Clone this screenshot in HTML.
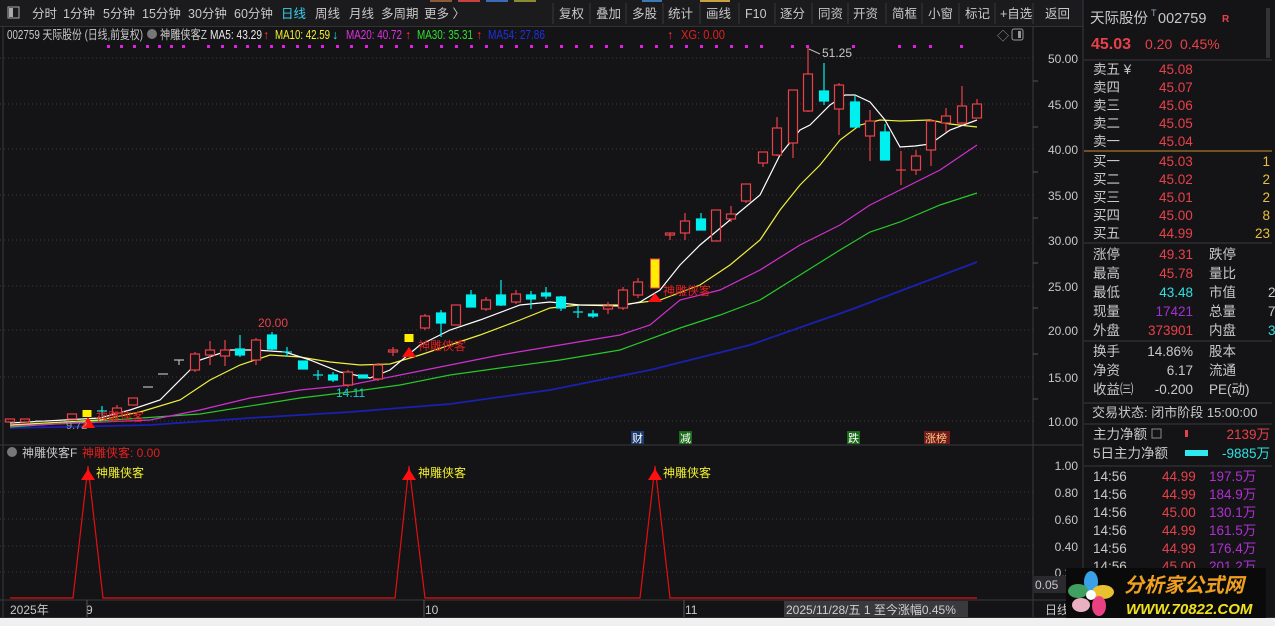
<!DOCTYPE html>
<html><head><meta charset="utf-8">
<style>
html,body{margin:0;padding:0;background:#141416;width:1275px;height:626px;overflow:hidden}
svg{display:block;font-family:"Liberation Sans","Noto Sans CJK SC",sans-serif}
</style></head><body>
<svg width="1275" height="626" viewBox="0 0 1275 626" xmlns="http://www.w3.org/2000/svg">
<rect width="1275" height="626" fill="#141416"/>
<!-- toolbar -->
<rect x="0" y="0" width="1083" height="26" fill="#1b1b1e"/>
<rect x="0" y="26" width="1083" height="1" fill="#333"/>
<rect x="430" y="0" width="22" height="2" fill="#8a5a3a"/><rect x="458" y="0" width="22" height="2" fill="#c84040"/><rect x="486" y="0" width="22" height="2" fill="#3a6ab8"/><rect x="514" y="0" width="22" height="2" fill="#8a8a30"/>
<rect x="642" y="0" width="20" height="2" fill="#3a7ab8"/><rect x="700" y="0" width="30" height="2" fill="#c8a040"/>
<rect x="8" y="7" width="11" height="11" fill="none" stroke="#aaa" stroke-width="1"/><rect x="9" y="8" width="4" height="9" fill="#aaa"/>
<g font-size="12.5" fill="#c8c8c8">
<text x="32" y="18">分时</text><text x="63" y="18">1分钟</text><text x="103" y="18">5分钟</text><text x="142" y="18">15分钟</text><text x="188" y="18">30分钟</text><text x="234" y="18">60分钟</text><text x="281" y="18" fill="#3ad0e8">日线</text><text x="315" y="18">周线</text><text x="349" y="18">月线</text><text x="381" y="18">多周期</text><text x="424" y="18">更多 〉</text>
<text x="559" y="18">复权</text><text x="596" y="18">叠加</text><text x="632" y="18">多股</text><text x="668" y="18">统计</text><text x="706" y="18">画线</text><text x="745" y="18">F10</text><text x="780" y="18">逐分</text><text x="818" y="18">同资</text><text x="853" y="18">开资</text><text x="892" y="18">简框</text><text x="928" y="18">小窗</text><text x="965" y="18">标记</text><text x="1000" y="18">+自选</text><text x="1045" y="18">返回</text>
</g>
<g stroke="#3a3a3e"><line x1="553" y1="3" x2="553" y2="24"/><line x1="590" y1="3" x2="590" y2="24"/><line x1="626" y1="3" x2="626" y2="24"/><line x1="663" y1="3" x2="663" y2="24"/><line x1="700" y1="3" x2="700" y2="24"/><line x1="739" y1="3" x2="739" y2="24"/><line x1="775" y1="3" x2="775" y2="24"/><line x1="812" y1="3" x2="812" y2="24"/><line x1="848" y1="3" x2="848" y2="24"/><line x1="886" y1="3" x2="886" y2="24"/><line x1="922" y1="3" x2="922" y2="24"/><line x1="959" y1="3" x2="959" y2="24"/><line x1="995" y1="3" x2="995" y2="24"/><line x1="1033" y1="3" x2="1033" y2="24"/></g>
<!-- info line -->
<g font-size="12.5">
<text x="7" y="39" fill="#c8c8c8" textLength="136" lengthAdjust="spacingAndGlyphs">002759 天际股份 (日线,前复权)</text>
<circle cx="152" cy="34" r="5" fill="#777"/>
<text x="160" y="39" fill="#c8c8c8" textLength="47" lengthAdjust="spacingAndGlyphs">神雕侠客Z</text>
<text x="210" y="39" fill="#e8e8e8" textLength="52" lengthAdjust="spacingAndGlyphs">MA5: 43.29</text><text x="263" y="39" fill="#ff3030">↑</text>
<text x="275" y="39" fill="#f0f030" textLength="55" lengthAdjust="spacingAndGlyphs">MA10: 42.59</text><text x="332" y="39" fill="#30e0e8">↓</text>
<text x="346" y="39" fill="#e030e0" textLength="56" lengthAdjust="spacingAndGlyphs">MA20: 40.72</text><text x="405" y="39" fill="#ff3030">↑</text>
<text x="417" y="39" fill="#30e030" textLength="56" lengthAdjust="spacingAndGlyphs">MA30: 35.31</text><text x="476" y="39" fill="#ff3030">↑</text>
<text x="488" y="39" fill="#2030e0" textLength="57" lengthAdjust="spacingAndGlyphs">MA54: 27.86</text><text x="667" y="39" fill="#ff3030">↑</text>
<text x="681" y="39" fill="#e02020" textLength="44" lengthAdjust="spacingAndGlyphs">XG: 0.00</text>
</g>
<text x="997" y="40" font-size="12" fill="#999">◇</text>
<rect x="1012" y="29" width="11" height="11" rx="2" fill="none" stroke="#999"/><rect x="1018" y="31" width="3" height="7" fill="#999"/>
<!-- grid -->
<g stroke="#3a3a3e" stroke-dasharray="1 3">
<line x1="0" y1="58" x2="1033" y2="58"/><line x1="0" y1="104" x2="1033" y2="104"/><line x1="0" y1="149" x2="1033" y2="149"/><line x1="0" y1="195" x2="1033" y2="195"/><line x1="0" y1="240" x2="1033" y2="240"/><line x1="0" y1="286" x2="1033" y2="286"/><line x1="0" y1="330" x2="1033" y2="330"/><line x1="0" y1="377" x2="1033" y2="377"/><line x1="0" y1="421" x2="1033" y2="421"/>
<line x1="0" y1="492" x2="1033" y2="492"/><line x1="0" y1="519" x2="1033" y2="519"/><line x1="0" y1="546" x2="1033" y2="546"/><line x1="0" y1="572" x2="1033" y2="572"/>
</g>
<!-- dividers -->
<g stroke="#3a3a3e"><line x1="1033" y1="27" x2="1033" y2="618"/><line x1="0" y1="445" x2="1083" y2="445"/><line x1="0" y1="600" x2="1083" y2="600"/><line x1="1083" y1="0" x2="1083" y2="626"/><line x1="3" y1="27" x2="3" y2="618"/></g>
<rect x="0" y="617" width="1275" height="9" fill="#2a2a2e"/><rect x="0" y="618" width="1275" height="8" fill="#f0f0f0"/>
<!-- magenta dots -->
<g fill="#e020e0">
<rect x="107" y="45" width="3" height="3"/><rect x="120" y="45" width="3" height="3"/><rect x="133" y="45" width="3" height="3"/><rect x="146" y="45" width="3" height="3"/><rect x="158" y="45" width="3" height="3"/><rect x="170" y="45" width="3" height="3"/><rect x="182" y="45" width="3" height="3"/><rect x="207" y="45" width="3" height="3"/><rect x="221" y="45" width="3" height="3"/><rect x="234" y="45" width="3" height="3"/><rect x="246" y="45" width="3" height="3"/><rect x="258" y="45" width="3" height="3"/><rect x="270" y="45" width="3" height="3"/><rect x="282" y="45" width="3" height="3"/><rect x="296" y="45" width="3" height="3"/><rect x="308" y="45" width="3" height="3"/><rect x="321" y="45" width="3" height="3"/><rect x="336" y="45" width="3" height="3"/><rect x="350" y="45" width="3" height="3"/><rect x="365" y="45" width="3" height="3"/><rect x="380" y="45" width="3" height="3"/><rect x="395" y="45" width="3" height="3"/><rect x="410" y="45" width="3" height="3"/><rect x="425" y="45" width="3" height="3"/><rect x="440" y="45" width="3" height="3"/><rect x="455" y="45" width="3" height="3"/><rect x="470" y="45" width="3" height="3"/><rect x="485" y="45" width="3" height="3"/><rect x="500" y="45" width="3" height="3"/><rect x="515" y="45" width="3" height="3"/><rect x="530" y="45" width="3" height="3"/><rect x="545" y="45" width="3" height="3"/><rect x="560" y="45" width="3" height="3"/><rect x="575" y="45" width="3" height="3"/><rect x="590" y="45" width="3" height="3"/><rect x="605" y="45" width="3" height="3"/><rect x="620" y="45" width="3" height="3"/><rect x="640" y="45" width="3" height="3"/><rect x="655" y="45" width="3" height="3"/><rect x="670" y="45" width="3" height="3"/><rect x="685" y="45" width="3" height="3"/><rect x="700" y="45" width="3" height="3"/><rect x="715" y="45" width="3" height="3"/><rect x="730" y="45" width="3" height="3"/><rect x="745" y="45" width="3" height="3"/><rect x="760" y="45" width="3" height="3"/><rect x="791" y="45" width="3" height="3"/><rect x="806" y="45" width="3" height="3"/><rect x="852" y="45" width="3" height="3"/><rect x="898" y="45" width="3" height="3"/><rect x="913" y="45" width="3" height="3"/><rect x="929" y="45" width="3" height="3"/><rect x="960" y="45" width="3" height="3"/>
</g>
<!-- MA lines -->
<g fill="none" stroke-width="1.2">
<polyline stroke="#1a20b0" stroke-width="1.8" points="10,428 150,425 250,418 350,412 450,404 550,390 650,370 750,345 850,310 977,262"/>
<polyline stroke="#28c828" points="10,427 200,414 300,398 350,392 400,385 450,375 500,368 560,360 620,350 680,328 720,315 760,300 800,275 840,250 870,232 900,222 940,205 977,193"/>
<polyline stroke="#d030d0" points="10,426 150,420 200,410 250,398 300,390 350,385 400,375 450,365 500,355 560,345 620,335 650,325 680,300 720,290 760,270 800,245 840,225 870,205 900,190 940,170 977,145"/>
<polyline stroke="#f0f040" points="10,425 100,420 140,412 180,400 210,380 240,365 270,355 300,357 330,362 360,365 390,364 420,355 450,345 480,335 520,320 550,308 580,305 620,305 660,300 700,285 730,265 760,240 780,210 800,185 820,165 840,140 860,125 880,120 900,121 930,120 950,124 977,127"/>
<polyline stroke="#ffffff" points="10,423 100,418 130,410 160,400 180,380 200,360 230,350 255,350 285,352 310,360 340,372 370,378 390,370 420,345 450,330 480,320 520,305 550,302 580,305 620,306 640,302 660,290 680,265 700,245 730,220 760,195 780,155 800,130 810,125 830,105 845,95 855,95 870,102 885,120 900,147 915,146 930,144 950,130 977,120"/>
</g>
<!-- candles -->
<g stroke="#e8414a" fill="none" stroke-width="1.2">
<rect x="5.5" y="419" width="9" height="3"/><rect x="20.5" y="419" width="9" height="3"/><rect x="67.5" y="414" width="9" height="5"/>
<line x1="117" y1="405" x2="117" y2="416"/><rect x="112.5" y="408" width="9" height="5" fill="#141416"/>
<rect x="128.5" y="398" width="9" height="7"/>
<line x1="195" y1="352" x2="195" y2="372"/><rect x="190.5" y="354" width="9" height="16" fill="#141416"/>
<line x1="210" y1="341" x2="210" y2="365"/><rect x="205.5" y="350" width="9" height="5" fill="#141416"/>
<line x1="225" y1="340" x2="225" y2="366"/><rect x="220.5" y="350" width="9" height="6" fill="#141416"/>
<line x1="256" y1="338" x2="256" y2="365"/><rect x="251.5" y="340" width="9" height="20" fill="#141416"/>
<line x1="348" y1="370" x2="348" y2="387"/><rect x="343.5" y="372" width="9" height="13" fill="#141416"/>
<line x1="378" y1="363" x2="378" y2="381"/><rect x="373.5" y="365" width="9" height="14" fill="#141416"/>
<line x1="393" y1="347" x2="393" y2="356"/><rect x="388.5" y="350" width="9" height="2"/>
<line x1="425" y1="314" x2="425" y2="330"/><rect x="420.5" y="316" width="9" height="12" fill="#141416"/>
<rect x="451.5" y="305" width="9" height="20"/>
<line x1="486" y1="297" x2="486" y2="311"/><rect x="481.5" y="300" width="9" height="9" fill="#141416"/>
<line x1="516" y1="290" x2="516" y2="304"/><rect x="511.5" y="294" width="9" height="8" fill="#141416"/>
<line x1="608" y1="302" x2="608" y2="314"/><rect x="603.5" y="306" width="9" height="3" fill="#141416"/>
<line x1="623" y1="287" x2="623" y2="310"/><rect x="618.5" y="290" width="9" height="18" fill="#141416"/>
<line x1="638" y1="278" x2="638" y2="298"/><rect x="633.5" y="282" width="9" height="13" fill="#141416"/>
<line x1="670" y1="233" x2="670" y2="240"/><rect x="665.5" y="233" width="9" height="2"/>
<line x1="685" y1="213" x2="685" y2="240"/><rect x="680.5" y="221" width="9" height="12" fill="#141416"/>
<rect x="711.5" y="210" width="9" height="31"/>
<line x1="731" y1="206" x2="731" y2="222"/><rect x="726.5" y="214" width="9" height="5" fill="#141416"/>
<line x1="746" y1="184" x2="746" y2="203"/><rect x="741.5" y="184" width="9" height="17" fill="#141416"/>
<line x1="763" y1="152" x2="763" y2="167"/><rect x="758.5" y="152" width="9" height="11" fill="#141416"/>
<line x1="777" y1="117" x2="777" y2="156"/><rect x="772.5" y="128" width="9" height="27" fill="#141416"/>
<line x1="793" y1="90" x2="793" y2="158"/><rect x="788.5" y="90" width="9" height="53" fill="#141416"/>
<line x1="808" y1="47" x2="808" y2="112"/><rect x="803.5" y="74" width="9" height="37" fill="#141416"/>
<line x1="839" y1="83" x2="839" y2="135"/><rect x="834.5" y="85" width="9" height="24" fill="#141416"/>
<line x1="870" y1="110" x2="870" y2="161"/><rect x="865.5" y="121" width="9" height="15" fill="#141416"/>
<line x1="901" y1="151" x2="901" y2="185"/><line x1="896" y1="170" x2="906" y2="170"/>
<line x1="916" y1="150" x2="916" y2="175"/><rect x="911.5" y="156" width="9" height="14" fill="#141416"/>
<line x1="931" y1="120" x2="931" y2="166"/><rect x="926.5" y="121" width="9" height="29" fill="#141416"/>
<line x1="946" y1="108" x2="946" y2="132"/><rect x="941.5" y="116" width="9" height="7" fill="#141416"/>
<line x1="962" y1="86" x2="962" y2="125"/><rect x="957.5" y="106" width="9" height="17" fill="#141416"/>
<line x1="977" y1="99" x2="977" y2="118"/><rect x="972.5" y="104" width="9" height="14" fill="#141416"/>
</g>
<g stroke="#bbb" stroke-width="1.2"><line x1="35" y1="421" x2="45" y2="421"/><line x1="143" y1="387" x2="153" y2="387"/><line x1="158" y1="374" x2="168" y2="374"/><line x1="174" y1="360" x2="184" y2="360"/><line x1="179" y1="360" x2="179" y2="365"/></g>
<g stroke="#00f0f0" fill="#00f0f0" stroke-width="1.2">
<line x1="102" y1="406" x2="102" y2="416"/><line x1="97" y1="411" x2="107" y2="411"/>
<line x1="240" y1="335" x2="240" y2="357"/><rect x="235.5" y="349" width="9" height="6"/>
<line x1="272" y1="332" x2="272" y2="350"/><rect x="267.5" y="335" width="9" height="14"/>
<line x1="287" y1="347" x2="287" y2="357"/><line x1="282" y1="352" x2="292" y2="352"/>
<rect x="298.5" y="361" width="9" height="8"/>
<line x1="318" y1="370" x2="318" y2="380"/><line x1="313" y1="375" x2="323" y2="375"/>
<line x1="333" y1="372" x2="333" y2="382"/><rect x="328.5" y="375" width="9" height="5"/>
<rect x="358.5" y="375" width="9" height="3"/>
<line x1="441" y1="310" x2="441" y2="337"/><rect x="436.5" y="313" width="9" height="10"/>
<line x1="471" y1="290" x2="471" y2="307"/><rect x="466.5" y="295" width="9" height="12"/>
<line x1="501" y1="280" x2="501" y2="306"/><rect x="496.5" y="295" width="9" height="10"/>
<line x1="531" y1="291" x2="531" y2="309"/><rect x="526.5" y="295" width="9" height="4"/>
<line x1="546" y1="287" x2="546" y2="299"/><rect x="541.5" y="293" width="9" height="3"/>
<line x1="561" y1="296" x2="561" y2="311"/><rect x="556.5" y="297" width="9" height="11"/>
<line x1="578" y1="306" x2="578" y2="318"/><line x1="573" y1="312" x2="583" y2="312"/>
<line x1="593" y1="310" x2="593" y2="318"/><rect x="588.5" y="314" width="9" height="2"/>
<line x1="701" y1="213" x2="701" y2="230"/><rect x="696.5" y="219" width="9" height="11"/>
<line x1="824" y1="63" x2="824" y2="105"/><rect x="819.5" y="91" width="9" height="10"/>
<line x1="855" y1="95" x2="855" y2="127"/><rect x="850.5" y="102" width="9" height="25"/>
<line x1="885" y1="124" x2="885" y2="160"/><rect x="880.5" y="132" width="9" height="28"/>
</g>
<!-- signal candles -->
<rect x="82.5" y="410" width="9" height="7" fill="#ffee00"/>
<rect x="404.5" y="334" width="9" height="8" fill="#ffee00"/>
<rect x="650.5" y="259" width="9" height="29" fill="#ffee00" stroke="#e8414a"/>
<g fill="#ff1010"><polygon points="88,417 81,428 95,428"/><polygon points="409,347 402,357 416,357"/><polygon points="655,293 648,302 662,302"/></g>
<g font-size="12" fill="#e02020"><text x="96" y="421">神雕侠客</text><text x="418" y="350">神雕侠客</text><text x="663" y="295">神雕侠客</text></g>
<text x="258" y="327" font-size="12" fill="#e8414a">20.00</text>
<text x="336" y="397" font-size="12" fill="#20c8c8">14.11</text>
<text x="66" y="429" font-size="11" fill="#999">9.72</text>
<path d="M809,49 L820,54" stroke="#bbb" fill="none"/><text x="822" y="57" font-size="12" fill="#c8c8c8">51.25</text>
<!-- event tags -->
<g font-size="11"><rect x="631" y="431" width="13" height="13" fill="#1a3a70"/><text x="632" y="442" fill="#fff">财</text>
<rect x="679" y="431" width="13" height="13" fill="#1a6a1a"/><text x="680" y="442" fill="#fff">减</text>
<rect x="847" y="431" width="13" height="13" fill="#1a6a1a"/><text x="848" y="442" fill="#fff">跌</text>
<rect x="924" y="431" width="26" height="13" fill="#701a1a"/><text x="925" y="442" fill="#fc8">涨榜</text></g>
<!-- price axis -->
<g font-size="12" fill="#c8c8c8" text-anchor="end">
<text x="1078" y="63">50.00</text><text x="1078" y="109">45.00</text><text x="1078" y="154">40.00</text><text x="1078" y="200">35.00</text><text x="1078" y="245">30.00</text><text x="1078" y="291">25.00</text><text x="1078" y="335">20.00</text><text x="1078" y="382">15.00</text><text x="1078" y="426">10.00</text>
<text x="1078" y="470">1.00</text><text x="1078" y="497">0.80</text><text x="1078" y="524">0.60</text><text x="1078" y="551">0.40</text><text x="1078" y="577">0.20</text>
</g>
<g stroke="#555"><line x1="1033" y1="81" x2="1038" y2="81"/><line x1="1033" y1="127" x2="1038" y2="127"/><line x1="1033" y1="172" x2="1038" y2="172"/><line x1="1033" y1="218" x2="1038" y2="218"/><line x1="1033" y1="263" x2="1038" y2="263"/><line x1="1033" y1="308" x2="1038" y2="308"/><line x1="1033" y1="354" x2="1038" y2="354"/><line x1="1033" y1="399" x2="1038" y2="399"/></g>
<rect x="1033" y="576" width="33" height="17" fill="#2a2a2e"/><text x="1035" y="589" font-size="12" fill="#c8c8c8">0.05</text>
<text x="1045" y="614" font-size="12" fill="#c8c8c8">日线</text>
<!-- lower panel -->
<circle cx="12" cy="452" r="5" fill="#777"/>
<text x="22" y="457" font-size="12" fill="#c8c8c8">神雕侠客F</text>
<text x="82" y="457" font-size="12" fill="#e02020">神雕侠客: 0.00</text>
<polyline fill="none" stroke="#e01010" stroke-width="1.2" points="10,598 73,598 88,466 103,598 395,598 409,466 425,598 640,598 655,466 670,598 977,598"/>
<g fill="#ff1010"><polygon points="88,469 81,480 95,480"/><polygon points="409,469 402,480 416,480"/><polygon points="655,469 648,480 662,480"/></g>
<g font-size="12" fill="#f0f030"><text x="96" y="477">神雕侠客</text><text x="418" y="477">神雕侠客</text><text x="663" y="477">神雕侠客</text></g>
<!-- date axis -->
<g font-size="12" fill="#c8c8c8"><text x="10" y="614">2025年</text><text x="86" y="614">9</text><text x="425" y="614">10</text><text x="685" y="614">11</text></g>
<g stroke="#555"><line x1="87" y1="600" x2="87" y2="617"/><line x1="424" y1="600" x2="424" y2="617"/><line x1="684" y1="600" x2="684" y2="617"/></g>
<rect x="784" y="601" width="184" height="16" fill="#3a3a3e"/><text x="786" y="614" font-size="12" fill="#d0d0d0">2025/11/28/五 1 至今涨幅0.45%</text>
<!-- right panel -->
<g font-size="13.5" fill="#c8c8c8">
<text x="1090" y="23" font-size="14.5">天际股份</text><text x="1151" y="16" font-size="9" fill="#9ab">T</text><text x="1158" y="23" font-size="14.5">002759</text><text x="1222" y="22" font-size="10" fill="#e8414a" font-weight="bold">R</text>
<text x="1091" y="49" font-size="16" font-weight="bold" fill="#e8414a">45.03</text><text x="1145" y="49" font-size="14" fill="#e8414a">0.20</text><text x="1180" y="49" font-size="14" fill="#e8414a">0.45%</text>
</g>
<rect x="1266" y="8" width="4" height="50" fill="#333"/>
<line x1="1084" y1="60" x2="1272" y2="60" stroke="#3a3a3e"/>
<g font-size="13.5" fill="#c8c8c8">
<text x="1093" y="74">卖五 ¥</text><text x="1093" y="92">卖四</text><text x="1093" y="110">卖三</text><text x="1093" y="128">卖二</text><text x="1093" y="146">卖一</text>
<text x="1093" y="166">买一</text><text x="1093" y="184">买二</text><text x="1093" y="202">买三</text><text x="1093" y="220">买四</text><text x="1093" y="238">买五</text>
</g>
<g font-size="13.5" fill="#e8414a">
<text x="1159" y="74">45.08</text><text x="1159" y="92">45.07</text><text x="1159" y="110">45.06</text><text x="1159" y="128">45.05</text><text x="1159" y="146">45.04</text>
<text x="1159" y="166">45.03</text><text x="1159" y="184">45.02</text><text x="1159" y="202">45.01</text><text x="1159" y="220">45.00</text><text x="1159" y="238">44.99</text>
</g>
<g font-size="13.5" fill="#e8c040" text-anchor="end"><text x="1270" y="166">1</text><text x="1270" y="184">2</text><text x="1270" y="202">2</text><text x="1270" y="220">8</text><text x="1270" y="238">23</text></g>
<line x1="1084" y1="151" x2="1272" y2="151" stroke="#c8902a"/>
<line x1="1084" y1="243" x2="1272" y2="243" stroke="#3a3a3e"/>
<g font-size="13.5" fill="#c8c8c8">
<text x="1093" y="259">涨停</text><text x="1093" y="278">最高</text><text x="1093" y="297">最低</text><text x="1093" y="316">现量</text><text x="1093" y="335">外盘</text>
<text x="1209" y="259">跌停</text><text x="1209" y="278">量比</text><text x="1209" y="297">市值</text><text x="1209" y="316">总量</text><text x="1209" y="335">内盘</text>
<text x="1268" y="297">2</text><text x="1268" y="316">7</text>
</g>
<g font-size="13.5" text-anchor="end"><text x="1193" y="259" fill="#e8414a">49.31</text><text x="1193" y="278" fill="#e8414a">45.78</text><text x="1193" y="297" fill="#30e0e0">43.48</text><text x="1193" y="316" fill="#a030d0">17421</text><text x="1193" y="335" fill="#e8414a">373901</text></g>
<text x="1268" y="335" font-size="13.5" fill="#30e0e0">3</text>
<line x1="1084" y1="341" x2="1272" y2="341" stroke="#3a3a3e"/>
<g font-size="13.5" fill="#c8c8c8">
<text x="1093" y="356">换手</text><text x="1093" y="375">净资</text><text x="1093" y="394">收益㈢</text>
<text x="1209" y="356">股本</text><text x="1209" y="375">流通</text><text x="1209" y="394">PE(动)</text>
<g text-anchor="end"><text x="1193" y="356">14.86%</text><text x="1193" y="375">6.17</text><text x="1193" y="394">-0.200</text></g>
</g>
<line x1="1084" y1="403" x2="1272" y2="403" stroke="#3a3a3e"/>
<text x="1092" y="417" font-size="13" fill="#c8c8c8">交易状态: 闭市阶段 15:00:00</text>
<line x1="1084" y1="424" x2="1272" y2="424" stroke="#3a3a3e"/>
<g font-size="13.5" fill="#c8c8c8"><text x="1093" y="439">主力净额</text><text x="1093" y="458">5日主力净额</text></g>
<rect x="1152" y="429" width="9" height="9" fill="none" stroke="#888"/>
<rect x="1185" y="430" width="3" height="7" fill="#e8414a"/>
<rect x="1185" y="450" width="23" height="6" fill="#30e8f0"/>
<text x="1270" y="439" font-size="13.5" fill="#e8414a" text-anchor="end">2139万</text>
<text x="1270" y="458" font-size="13.5" fill="#30e0e0" text-anchor="end">-9885万</text>
<line x1="1084" y1="466" x2="1272" y2="466" stroke="#3a3a3e"/>
<g font-size="13.5">
<g fill="#c8c8c8"><text x="1093" y="481">14:56</text><text x="1093" y="499">14:56</text><text x="1093" y="517">14:56</text><text x="1093" y="535">14:56</text><text x="1093" y="553">14:56</text><text x="1093" y="571">14:56</text></g>
<g fill="#e8414a"><text x="1162" y="481">44.99</text><text x="1162" y="499">44.99</text><text x="1162" y="517">45.00</text><text x="1162" y="535">44.99</text><text x="1162" y="553">44.99</text><text x="1162" y="571">45.00</text></g>
<g fill="#b030d0"><text x="1209" y="481">197.5万</text><text x="1209" y="499">184.9万</text><text x="1209" y="517">130.1万</text><text x="1209" y="535">161.5万</text><text x="1209" y="553">176.4万</text><text x="1209" y="571">201.2万</text></g>
</g>
<!-- logo -->
<rect x="1066" y="568" width="200" height="50" fill="#0a0a0a"/>
<g transform="translate(1091,595)">
<ellipse cx="0" cy="-13" rx="7" ry="11" fill="#3aa0e8"/><ellipse cx="12" cy="-3" rx="11" ry="7" fill="#e8c030"/><ellipse cx="8" cy="11" rx="7" ry="10" fill="#e84080"/><ellipse cx="-10" cy="10" rx="9" ry="7" fill="#e8b0c0"/><ellipse cx="-13" cy="-4" rx="10" ry="7" fill="#40a060"/><circle cx="0" cy="0" r="5" fill="#fff"/>
</g>
<text x="1124" y="592" font-size="20" font-weight="bold" fill="#f0a020" font-style="italic">分析家公式网</text>
<text x="1126" y="614" font-size="15" font-weight="bold" fill="#f0e020" font-style="italic">WWW.70822.COM</text>
</svg>
</body></html>
